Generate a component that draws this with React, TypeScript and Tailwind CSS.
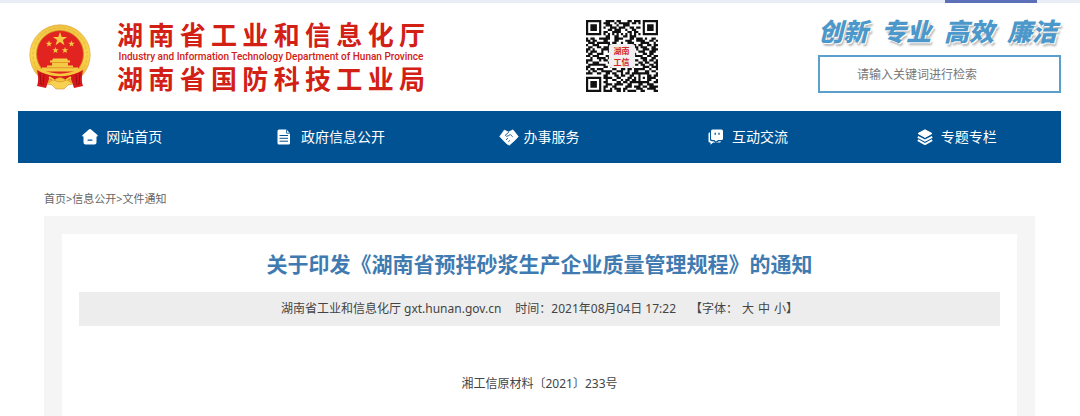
import type { ReactNode } from "react";

const qrRows = [
  "111111100111101100011011101111111",
  "100000101110010111110110101000001",
  "101110100111001001110000001011101",
  "101110101001110111001101101011101",
  "101110100011011100100110001011101",
  "100000101100111100011011001000001",
  "111111101010101010101010101111111",
  "000000000110011001101110000000000",
  "101100111110011110001101110100110",
  "110110001100011000111001111001101",
  "011101111110110010011100011110010",
  "100111000011100111000110110011011",
  "011001101110110111100011011100110",
  "110100011110000111011001001110111",
  "101110010011101100110000111001110",
  "011001110001110011011110001101100",
  "110111000110101111000011110011011",
  "001001111011011001101100011100110",
  "111000101100110110011111001101101",
  "100111000011011001111000110110011",
  "011111111000100110000111011001101",
  "110000001101111001101100001110111",
  "101101110000110011011011111001001",
  "010110011111001110010011000110110",
  "111001100110110010110111111110001",
  "000000001100011011001100100011011",
  "111111101111001100011010101011110",
  "100000100100110010110110100011001",
  "101110101100001101101111111110011",
  "101110100111011110011000110011100",
  "101110101100110000111011101101111",
  "100000101001011101100001110011110",
  "111111101111001101011110011000011",
];

const qrPath = qrRows
  .flatMap((row, y) => row.split("").map((cell, x) => (cell === "1" ? `M${x} ${y}h1v1h-1z` : "")))
  .join("");

function Emblem() {
  return (
    <svg viewBox="0 0 62 66" className="h-[66px] w-[62px] shrink-0" role="img" aria-label="国徽">
      <defs>
        <linearGradient id="gold" x1="0" y1="0" x2="0" y2="1">
          <stop offset="0" stopColor="#efc343" />
          <stop offset="0.5" stopColor="#fbd84f" />
          <stop offset="1" stopColor="#eaaf2d" />
        </linearGradient>
      </defs>
      <circle cx="31" cy="31" r="30.2" fill="url(#gold)" stroke="#d8a337" strokeWidth="0.6" />
      <circle cx="31" cy="31" r="27" fill="none" stroke="#e3b03a" strokeWidth="0.8" strokeDasharray="3 2" />
      <circle cx="31" cy="30" r="23.500" fill="#e22420" stroke="#cf8e25" strokeWidth="0.8" />
      <g fill="#f4c944">
        <path d="M31 8l1.800 4.900h5.200l-4.100 3.200 1.500 5.100-4.400-3.100-4.400 3.100 1.500-5.100-4.100-3.200h5.200z" />
        <path id="small-star" d="M20 16.500l.8 2.300h2.400l-1.900 1.500.7 2.300-2-1.400-2 1.400.7-2.300-1.900-1.500h2.400z" />
        <use href="#small-star" x="22.500" />
        <use href="#small-star" x="6.500" y="6.500" />
        <use href="#small-star" x="16" y="6.500" />
        <path d="M24 34.500h14l1 2h2v2h-2v3h5v2h5v4H13v-4h5v-2h5v-3h-2v-2h2z" />
      </g>
      <path d="M22 38.500h18M17 43.700h28" stroke="#db8c22" strokeWidth="0.8" />
      <path d="M8 46c5 3 9 4 14 3l-3 9-2 6-9-2c2-5 1-11 0-16zM54 46c-5 3-9 4-14 3l3 9 2 6 9-2c-2-5-1-11 0-16z" fill="#d7171b" />
      <path d="M11 49l1 12M15 51l-1 10M51 49l-1 12M47 51l1 10" stroke="#9d0f13" strokeWidth="1" />
      <path d="M18 50q13 5 26 0l-4 6H22z" fill="#d7171b" />
      <path d="M12 46.500q19 9 38 0" fill="none" stroke="#f5c83e" strokeWidth="2.500" />
      <path d="M18 60q6-6 13-3q7-3 13 3l-5 1-4 4h-8l-4-4z" fill="#f8d150" stroke="#c97f20" strokeWidth="0.5" />
      <path d="M25 56q6-5 12 0q-6 4-12 0z" fill="#f3c43a" stroke="#c97f20" strokeWidth="0.5" />
      <path d="M20 53l5 3M42 53l-5 3" stroke="#f5c83e" strokeWidth="2" />
    </svg>
  );
}

function QrCode() {
  return (
    <div className="relative grid size-[72px] shrink-0 place-items-center">
      <svg viewBox="0 0 33 33" className="size-[72px]" role="img" aria-label="二维码">
        <path d={qrPath} fill="#111" />
        <rect x="10.500" y="11" width="12" height="11" rx="1.500" fill="#f1efef" />
      </svg>
      <div className="absolute text-center font-['Noto_Sans_CJK_SC',sans-serif] text-[8px] leading-[11px] font-bold text-[#d3272b]">
        湖南
        <br />
        工信
      </div>
    </div>
  );
}

const HomeIcon = (
  <svg viewBox="0 0 16 16" className="size-4" fill="#fff" aria-hidden="true">
    <path d="M6.600.7a2 2 0 0 1 2.800 0l6 5.300c.7.7.4 1.600-.5 1.600H14.500v5.900a2 2 0 0 1-2 2h-9a2 2 0 0 1-2-2V7.600H1.100c-.9 0-1.200-.9-.5-1.600z" />
    <rect x="5.500" y="10.500" width="5" height="1.300" rx=".5" fill="#015293" />
  </svg>
);

const DocumentIcon = (
  <svg viewBox="0 0 16 16" className="size-4" aria-hidden="true">
    <path d="M2 .5h7.500l3.500 4V14a1.500 1.500 0 0 1-1.500 1.500h-9.500A1.500 1.500 0 0 1 .5 14V2A1.500 1.500 0 0 1 2 .5z" fill="#fff" />
    <path d="M9.500.5v3.700H13" fill="none" stroke="#015293" strokeWidth=".8" />
    <path d="M2.500 6.500h8.500M2.500 9.300h8.500M2.500 12.200h8.500" stroke="#015293" strokeWidth="1" />
  </svg>
);

const HandshakeIcon = (
  <svg viewBox="0 0 20 17" className="h-[17px] w-5" aria-hidden="true">
    <path d="M5.300 1l4.200 2 4.500-2.200L19.300 7.500l-3 3.400-6 5.300-2-1-2.700-2.400L.7 7.500z" fill="#fff" stroke="#fff" strokeWidth=".6" strokeLinejoin="round" />
    <path d="M9.800 3.200L6.300 6.200q.8 1.800 3 .6l2-1.300 2.400 2.300M7 10.800l2-1.600M9.300 12.800l1.600-1.500" fill="none" stroke="#015293" strokeWidth=".9" />
  </svg>
);

const ChatIcon = (
  <svg viewBox="0 0 16 16" className="size-4" fill="#fff" aria-hidden="true">
    <path d="M4.500.5h9A1.500 1.500 0 0 1 15 2v7.500a1.500 1.500 0 0 1-1.500 1.500H10l-2 1.500L6.200 11H4.500A1.500 1.500 0 0 1 3 9.500V2A1.500 1.500 0 0 1 4.500.5z" />
    <path d="M2 3.500A1.300 1.300 0 0 0 .5 4.800v7.400a1.300 1.300 0 0 0 1.300 1.300h.7v2.300l2.700-2.300h6.500a1.300 1.300 0 0 0 1.200-1.300h-2.200L8.200 14 5.600 12.200H3.800A1.800 1.800 0 0 1 2 10.400z" />
    <path d="M7.200 3.800v2M11 3.800v2" stroke="#015293" strokeWidth="1.300" />
  </svg>
);

const LayersIcon = (
  <svg viewBox="0 0 16 16" className="size-4" aria-hidden="true">
    <path d="M8 .8l7 3.700-7 3.900-7-3.900z" fill="#fff" stroke="#fff" strokeLinejoin="round" />
    <path d="M.8 7.800L8 11.700 15.200 7.800M.8 11.200L8 15.100l7.200-3.900" fill="none" stroke="#fff" strokeWidth="1.900" strokeLinejoin="round" />
  </svg>
);

const navItems: { label: string; icon: ReactNode; gap: string }[] = [
  { label: "网站首页", icon: HomeIcon, gap: "gap-2" },
  { label: "政府信息公开", icon: DocumentIcon, gap: "gap-2" },
  { label: "办事服务", icon: HandshakeIcon, gap: "gap-1" },
  { label: "互动交流", icon: ChatIcon, gap: "gap-2" },
  { label: "专题专栏", icon: LayersIcon, gap: "gap-2" },
];

const slogans = ["创新", "专业", "高效", "廉洁"];

export default function App() {
  return (
    <div className="flex min-h-screen flex-col bg-white font-['Noto_Sans','Noto_Sans_CJK_SC',sans-serif] text-[#444]">
      <div className="flex h-[3px] justify-end bg-[#e9edf5] pr-[43px]">
        <div className="w-[92px] bg-[#5b70b8]" />
      </div>

      <header className="flex h-[108px] items-start justify-between pr-[19px] pl-[29px]">
        <div className="flex items-center gap-[26px] pt-4">
          <Emblem />
          <div className="w-[308px] text-[#d22015]">
            <h1 className="text-[26px] leading-8 font-bold [text-align-last:justify]">湖南省工业和信息化厅</h1>
            <p className="text-center font-[Roboto,sans-serif] text-[10px] leading-3 font-medium whitespace-nowrap">
              Industry and Information Technology Department of Hunan Province
            </p>
            <p className="text-[26px] leading-8 font-bold [text-align-last:justify]">湖南省国防科技工业局</p>
          </div>
        </div>

        <div className="pt-[17px]">
          <QrCode />
        </div>

        <div className="w-[243px] pt-3">
          <div className="flex justify-between pr-1 text-[25px] leading-8 font-black text-[#4d98ca] italic [text-shadow:1px_1px_0_#fff,2px_3px_2px_#bbb]">
            {slogans.map((word) => (
              <span key={word}>{word}</span>
            ))}
          </div>
          <input
            type="search"
            aria-label="站内搜索"
            placeholder="请输入关键词进行检索"
            className="mt-2 block h-[38px] w-full border-2 border-[#5ba0cc] pr-3 pl-[37px] text-xs placeholder:text-[#777]"
          />
        </div>
      </header>

      <nav className="mr-[19px] ml-[18px] grid h-[52px] grid-cols-5 bg-[#015293]">
        {navItems.map((item) => (
          <a key={item.label} href="#" className={`flex items-center justify-center text-sm text-white ${item.gap}`}>
            {item.icon}
            {item.label}
          </a>
        ))}
      </nav>

      <main className="mr-[45px] ml-[44px] flex flex-1 flex-col">
        <div className="flex pt-7 pb-[9px] text-[11px] leading-4 text-[#666]">
          <a href="#">首页</a>&gt;<a href="#">信息公开</a>&gt;<a href="#">文件通知</a>
        </div>
        <div className="flex flex-1 flex-col bg-[#f5f5f5] px-[18px] pt-[18px]">
          <article className="flex-1 bg-white px-[17px] pt-[14px] text-center">
            <h2 className="text-[21px] leading-8 font-bold text-[#3f7bb0]">
              关于印发《湖南省预拌砂浆生产企业质量管理规程》的通知
            </h2>
            <div className="mt-3 flex h-[34px] items-center justify-center gap-[14px] bg-[#ededed] text-xs">
              <span>湖南省工业和信息化厅 gxt.hunan.gov.cn</span>
              <span>时间：2021年08月04日 17:22</span>
              <span className="flex gap-1">
                <span>【字体：</span>
                <button type="button">大</button>
                <button type="button">中</button>
                <span>
                  <button type="button">小</button>】
                </span>
              </span>
            </div>
            <p className="mt-12 text-xs leading-5">湘工信原材料〔2021〕233号</p>
          </article>
        </div>
      </main>
    </div>
  );
}
